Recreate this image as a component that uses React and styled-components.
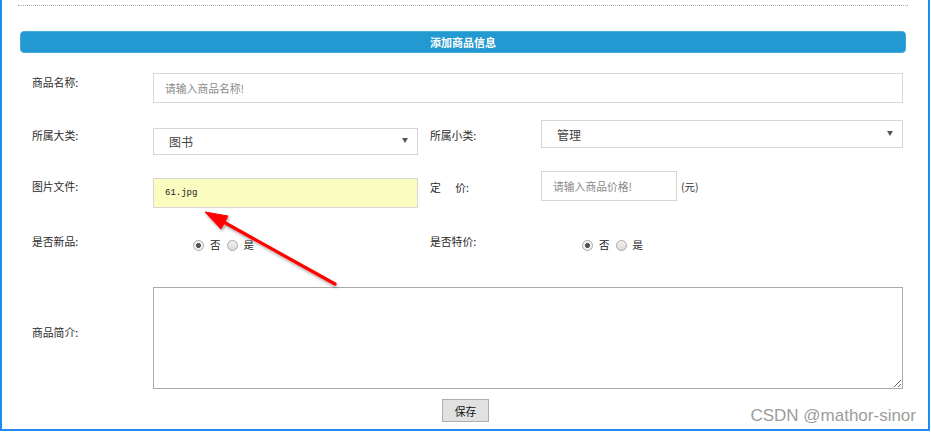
import React from "react";
import styled, { createGlobalStyle } from "styled-components";

const GlobalStyle = createGlobalStyle`
  html, body {
    margin: 0;
    padding: 0;
    background: #ffffff;
  }
  body {
    font-family: "Noto Sans CJK SC", "Noto Sans", sans-serif;
  }
`;

const Frame = styled.div`
  position: relative;
  width: 930px;
  height: 431px;
  box-sizing: border-box;
  border: 2px solid #1f8bf0;
  border-top: none;
  overflow: hidden;
`;

const Content = styled.div`
  padding: 0 22px 0 18px;
`;

const Divider = styled.div`
  margin: 5px -2px 0;
  border-top: 1px dotted #a8a8a8;
`;

const Header = styled.div`
  margin-top: 25px;
  height: 22px;
  box-sizing: border-box;
  border: 1px solid #46a9dc;
  border-radius: 4px;
  background: #2299d0;
  color: #ffffff;
  font-size: 11px;
  font-weight: bold;
  display: flex;
  align-items: center;
  justify-content: center;
`;

const FormGrid = styled.div`
  display: grid;
  grid-template-columns: 133px 277px 111px 362px;
  grid-template-rows: 60px 50px 52px 65px 115px;
  align-items: start;
`;

const Label = styled.div`
  margin-top: ${(p) => p.$top}px;
  padding-left: ${(p) => (p.$first ? 12 : 0)}px;
  font-size: 10.8px;
  line-height: 14px;
  color: #2a2a2a;
  white-space: pre;
`;

const Cell = styled.div`
  margin-top: ${(p) => p.$top}px;
  grid-column: ${(p) => p.$span || "auto"};
  display: flex;
  align-items: center;
`;

const TextInput = styled.input`
  box-sizing: border-box;
  width: ${(p) => p.$width};
  height: 30px;
  padding: 0 0 0 11px;
  border: 1px solid #d6d6d6;
  background: ${(p) => (p.$filled ? "#fafcc0" : "#ffffff")};
  font-family: ${(p) =>
    p.$filled ? '"Liberation Mono", monospace' : '"Noto Sans CJK SC", sans-serif'};
  font-size: ${(p) => (p.$filled ? "9px" : "10.8px")};
  color: #222;
  outline: none;
  &::placeholder {
    color: #8a8a8a;
  }
`;

const SelectBox = styled.div`
  box-sizing: border-box;
  width: ${(p) => p.$width};
  height: ${(p) => p.$height}px;
  border: 1px solid #d6d6d6;
  padding: 0 9px 0 15px;
  display: flex;
  align-items: center;
  justify-content: space-between;
  font-size: 12px;
  color: #444;
`;

const Caret = styled.span`
  width: 0;
  height: 0;
  border-left: 3px solid transparent;
  border-right: 3px solid transparent;
  border-top: 5px solid #555;
  margin-top: -2px;
`;

const Unit = styled.span`
  margin-left: 4px;
  font-size: 10.5px;
  color: #333;
`;

const RadioGroup = styled.div`
  padding-left: ${(p) => p.$indent}px;
  display: flex;
  align-items: center;
  font-size: 10.5px;
  line-height: 14px;
  color: #222;
`;

const Radio = styled.span`
  width: 11px;
  height: 11px;
  box-sizing: border-box;
  border-radius: 50%;
  border: 1px solid #a8a8a8;
  background: ${(p) =>
    p.$checked
      ? "radial-gradient(circle, #555 0 2.2px, #f2f2f2 2.7px)"
      : "linear-gradient(#f4f4f4, #d9d9d9)"};
  margin-right: 6px;
  flex-shrink: 0;
`;

const RadioText = styled.span`
  margin-right: 6px;
`;

const TextArea = styled.textarea`
  box-sizing: border-box;
  width: 750px;
  height: 102px;
  border: 1px solid #a9a9a9;
  resize: both;
  outline: none;
`;

const ButtonRow = styled.div`
  margin-top: 4px;
  display: flex;
  justify-content: center;
  padding-left: 5px;
`;

const SaveButton = styled.button`
  width: 47px;
  height: 23px;
  border: 1px solid #adadad;
  background: #e1e1e1;
  font-family: "Noto Sans CJK SC", sans-serif;
  font-size: 10.8px;
  color: #111;
  padding: 0;
`;

const Watermark = styled.div`
  position: absolute;
  right: 12px;
  top: 407px;
  font-family: "Liberation Sans", Arial, sans-serif;
  font-size: 17px;
  line-height: 17px;
  color: #9c9c9c;
`;

const ArrowLayer = styled.svg`
  position: absolute;
  left: 0;
  top: 0;
  pointer-events: none;
`;

const YesNo = ({ indent }) => (
  <RadioGroup $indent={indent}>
    <Radio $checked />
    <RadioText>否</RadioText>
    <Radio />
    <RadioText>是</RadioText>
  </RadioGroup>
);

const App = () => {
  return (
    <>
      <GlobalStyle />
      <Frame>
        <Content>
          <Divider />
          <Header>添加商品信息</Header>
          <FormGrid>
            <Label $first $top={22}>商品名称:</Label>
            <Cell $top={20} $span="2 / 5">
              <TextInput $width="750px" placeholder="请输入商品名称!" />
            </Cell>

            <Label $first $top={15}>所属大类:</Label>
            <Cell $top={15}>
              <SelectBox $width="265px" $height={27}>
                图书
                <Caret />
              </SelectBox>
            </Cell>
            <Label $top={15}>所属小类:</Label>
            <Cell $top={7}>
              <SelectBox $width="362px" $height={28}>
                管理
                <Caret />
              </SelectBox>
            </Cell>

            <Label $first $top={16}>图片文件:</Label>
            <Cell $top={15}>
              <TextInput $width="265px" $filled defaultValue="61.jpg" />
            </Cell>
            <Label $top={17}>{"定      价:"}</Label>
            <Cell $top={8}>
              <TextInput $width="136px" placeholder="请输入商品价格!" />
              <Unit>(元)</Unit>
            </Cell>

            <Label $first $top={19}>是否新品:</Label>
            <Cell $top={23}>
              <YesNo indent={40} />
            </Cell>
            <Label $top={19}>是否特价:</Label>
            <Cell $top={23}>
              <YesNo indent={41} />
            </Cell>

            <Label $first $top={45}>商品简介:</Label>
            <Cell $top={7} $span="2 / 5">
              <TextArea />
            </Cell>
          </FormGrid>
          <ButtonRow>
            <SaveButton>保存</SaveButton>
          </ButtonRow>
        </Content>

        <ArrowLayer width="930" height="431" viewBox="0 0 930 431">
          <defs>
            <filter id="shadow" x="-20%" y="-20%" width="140%" height="140%">
              <feDropShadow dx="1" dy="2" stdDeviation="1.5" floodColor="#000" floodOpacity="0.35" />
            </filter>
          </defs>
          <g filter="url(#shadow)" fill="#ff0000" stroke="#ff0000">
            <line x1="333" y1="284" x2="218" y2="220" strokeWidth="3.2" strokeLinecap="round" />
            <polygon points="203,212 226,216 219,229" strokeWidth="1" strokeLinejoin="round" />
          </g>
        </ArrowLayer>

        <Watermark>CSDN @mathor-sinor</Watermark>
      </Frame>
    </>
  );
};

export default App;
